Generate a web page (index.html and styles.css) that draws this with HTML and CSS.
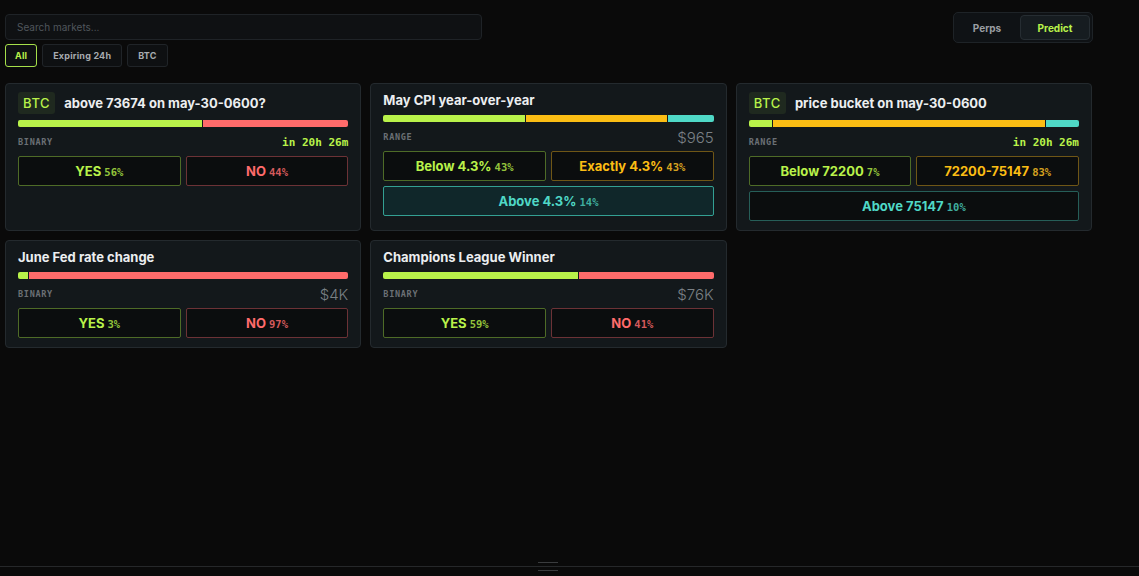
FILE: index.html
```html
<!DOCTYPE html>
<html lang="en">
<head>
    <meta charset="UTF-8">
    <meta name="viewport" content="width=device-width, initial-scale=1.0">
    <title>Predict Markets</title>
    <link rel="stylesheet" href="styles.css">
</head>
<body>
    <main class="page">
        <header class="top">
            <div class="filters">
                <input class="search" type="text" placeholder="Search markets...">
                <div class="chips">
                    <button class="chip active">All</button>
                    <button class="chip">Expiring 24h</button>
                    <button class="chip">BTC</button>
                </div>
            </div>
            <div class="toggle">
                <button class="toggle-btn">Perps</button>
                <button class="toggle-btn active">Predict</button>
            </div>
        </header>

        <section class="grid">
            <div class="card">
                <div class="card-head">
                    <span class="badge">BTC</span>
                    <span class="title">above 73674 on may-30-0600?</span>
                </div>
                <div class="bar">
                    <span class="seg lime" style="width: 56%"></span>
                    <span class="seg red" style="width: 44%"></span>
                </div>
                <div class="meta">
                    <span class="kind">BINARY</span>
                    <span class="expiry">in 20h 26m</span>
                </div>
                <div class="options">
                    <button class="opt yes">YES <small>56%</small></button>
                    <button class="opt no">NO <small>44%</small></button>
                </div>
            </div>

            <div class="card">
                <div class="card-head">
                    <span class="title">May CPI year-over-year</span>
                </div>
                <div class="bar">
                    <span class="seg lime" style="width: 43%"></span>
                    <span class="seg amber" style="width: 43%"></span>
                    <span class="seg teal" style="width: 14%"></span>
                </div>
                <div class="meta">
                    <span class="kind">RANGE</span>
                    <span class="volume">$965</span>
                </div>
                <div class="options">
                    <button class="opt yes">Below 4.3% <small>43%</small></button>
                    <button class="opt mid">Exactly 4.3% <small>43%</small></button>
                    <button class="opt high wide selected">Above 4.3% <small>14%</small></button>
                </div>
            </div>

            <div class="card">
                <div class="card-head">
                    <span class="badge">BTC</span>
                    <span class="title">price bucket on may-30-0600</span>
                </div>
                <div class="bar">
                    <span class="seg lime" style="width: 7%"></span>
                    <span class="seg amber" style="width: 83%"></span>
                    <span class="seg teal" style="width: 10%"></span>
                </div>
                <div class="meta">
                    <span class="kind">RANGE</span>
                    <span class="expiry">in 20h 26m</span>
                </div>
                <div class="options">
                    <button class="opt yes">Below 72200 <small>7%</small></button>
                    <button class="opt mid">72200-75147 <small>83%</small></button>
                    <button class="opt high wide">Above 75147 <small>10%</small></button>
                </div>
            </div>

            <div class="card">
                <div class="card-head">
                    <span class="title">June Fed rate change</span>
                </div>
                <div class="bar">
                    <span class="seg lime" style="width: 3%"></span>
                    <span class="seg red" style="width: 97%"></span>
                </div>
                <div class="meta">
                    <span class="kind">BINARY</span>
                    <span class="volume">$4K</span>
                </div>
                <div class="options">
                    <button class="opt yes">YES <small>3%</small></button>
                    <button class="opt no">NO <small>97%</small></button>
                </div>
            </div>

            <div class="card">
                <div class="card-head">
                    <span class="title">Champions League Winner</span>
                </div>
                <div class="bar">
                    <span class="seg lime" style="width: 59%"></span>
                    <span class="seg red" style="width: 41%"></span>
                </div>
                <div class="meta">
                    <span class="kind">BINARY</span>
                    <span class="volume">$76K</span>
                </div>
                <div class="options">
                    <button class="opt yes">YES <small>59%</small></button>
                    <button class="opt no">NO <small>41%</small></button>
                </div>
            </div>
        </section>
    </main>

    <div class="resizer">
        <span class="handle"></span>
    </div>
    <div class="dock"></div>
</body>
</html>
```

FILE: styles.css
```css
* {
    box-sizing: border-box;
}
html, body {
    height: 100%;
}
body {
    margin: 0;
    background-color: #0a0a0a;
    color: #e6e8ea;
    font-family: 'Inter', 'Noto Sans', sans-serif;
    display: flex;
    flex-direction: column;
}
button {
    font-family: inherit;
    cursor: pointer;
}
.page {
    flex: 1;
    width: 1087px;
    margin-left: 5px;
}
.top {
    display: flex;
    justify-content: space-between;
    align-items: flex-start;
    padding-top: 12px;
}
.filters {
    width: 477px;
    padding-top: 2px;
}
.search {
    display: block;
    width: 100%;
    height: 26px;
    background-color: #0f1113;
    border: 1px solid #1f2327;
    border-radius: 4px;
    padding: 0 11px;
    color: #ccc;
    font-family: inherit;
    font-size: 10px;
    outline: none;
}
.search::placeholder {
    color: #50565c;
}
.chips {
    display: flex;
    gap: 5px;
    margin-top: 4px;
}
.chip {
    height: 23px;
    padding: 0 10px;
    background-color: #0e1012;
    border: 1px solid #202428;
    border-radius: 3px;
    color: #a7abaf;
    font-size: 9px;
    font-weight: 700;
    letter-spacing: 0.2px;
}
.chip.active {
    padding: 0 9px;
    border-color: #a6e04a;
    color: #b9f24a;
}
.toggle {
    display: flex;
    gap: 2px;
    padding: 2px;
    margin-right: -1px;
    background-color: #0f1215;
    border: 1px solid #1e2327;
    border-radius: 5px;
}
.toggle-btn {
    height: 25px;
    width: 62px;
    background: transparent;
    border: 1px solid transparent;
    border-radius: 4px;
    color: #9a9ea2;
    font-size: 10px;
    font-weight: 700;
}
.toggle-btn.active {
    width: 70px;
    background-color: #161c20;
    border-color: #262d32;
    color: #b9f24a;
}
.grid {
    display: grid;
    grid-template-columns: repeat(3, 1fr);
    gap: 9px;
    margin-top: 16px;
}
.card {
    background-color: #13181b;
    border: 1px solid #242a2e;
    border-radius: 4px;
    padding: 8px 12px 9px;
}
.card-head {
    display: flex;
    align-items: center;
    gap: 9px;
    margin-bottom: 6px;
}
.badge {
    display: inline-block;
    height: 22px;
    line-height: 22px;
    padding: 0 5px;
    background-color: #1f291f;
    border-radius: 3px;
    color: #b9f24a;
    font-size: 13px;
    font-weight: 500;
    letter-spacing: 0.6px;
}
.title {
    font-size: 13px;
    font-weight: 700;
    line-height: 17px;
    color: #eceef0;
}
.bar {
    display: flex;
    gap: 1px;
    height: 7px;
}
.seg {
    display: block;
    height: 100%;
}
.seg:first-child {
    border-radius: 2px 0 0 2px;
}
.seg:last-child {
    border-radius: 0 2px 2px 0;
}
.seg.lime { background-color: #b9f24a; }
.seg.red { background-color: #ff6b6b; }
.seg.amber { background-color: #fbbd14; }
.seg.teal { background-color: #4fd8c6; }
.meta {
    display: flex;
    justify-content: space-between;
    align-items: center;
    height: 20px;
    margin: 5px 0 4px;
}
.kind {
    font-family: 'DejaVu Sans Mono', monospace;
    font-size: 8.5px;
    font-weight: 700;
    letter-spacing: 0.7px;
    color: #6b7075;
}
.expiry {
    font-family: 'DejaVu Sans Mono', monospace;
    font-size: 11px;
    font-weight: 700;
    color: #b9f24a;
}
.volume {
    font-size: 15px;
    font-weight: 300;
    color: #7a8085;
}
.options {
    display: grid;
    grid-template-columns: 1fr 1fr;
    gap: 5px;
}
.opt {
    height: 30px;
    background-color: #0b0d0e;
    border: 1px solid #4e6b27;
    border-radius: 2px;
    font-size: 13px;
    font-weight: 700;
    color: #b9f24a;
}
.opt small {
    font-family: 'DejaVu Sans Mono', monospace;
    font-size: 10.5px;
    font-weight: 700;
    color: #94c43c;
}
.opt.no {
    border-color: #6c3236;
    color: #ff6b6b;
}
.opt.no small {
    color: #d45a5c;
}
.opt.mid {
    border-color: #6f5616;
    color: #fbbd14;
}
.opt.mid small {
    color: #d6a220;
}
.opt.high {
    border-color: #265e58;
    color: #4fd8c6;
}
.opt.high small {
    color: #3fae9f;
}
.opt.wide {
    grid-column: span 2;
}
.opt.selected {
    background-color: #10272a;
    border-color: #33a093;
}
.resizer {
    position: relative;
    height: 1px;
    background-color: #26282a;
    margin-bottom: 9px;
}
.handle {
    position: absolute;
    left: 538px;
    top: -4px;
    width: 20px;
    height: 9px;
    border-top: 1px solid #3a3c3e;
    border-bottom: 1px solid #3a3c3e;
}
.dock {
    height: 0;
}
```
